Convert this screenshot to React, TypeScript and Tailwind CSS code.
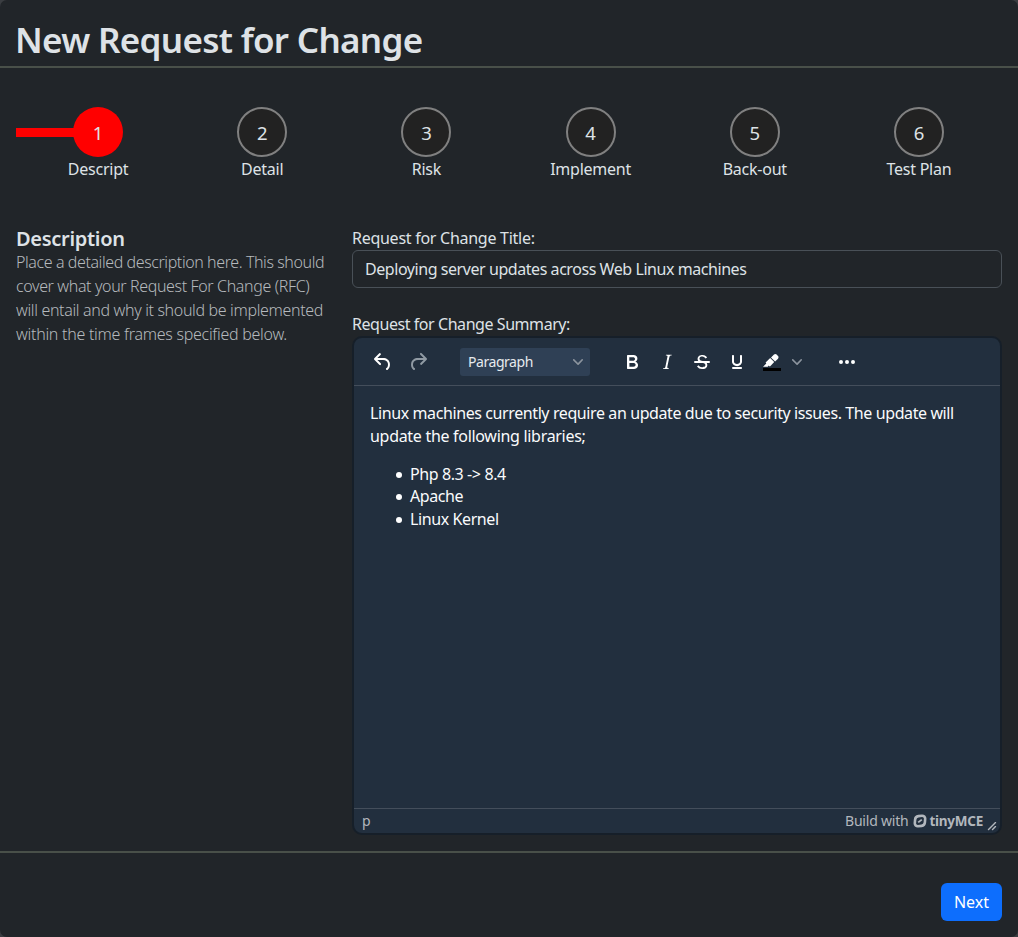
const steps = ['Descript', 'Detail', 'Risk', 'Implement', 'Back-out', 'Test Plan'];

const icons = {
  undo: 'M6.4 8H12c3.7 0 6.2 2 6.8 5.1.6 2.7-.4 5.6-2.3 6.8a1 1 0 0 1-1-1.8c1.1-.6 1.8-2.7 1.4-4.6-.5-2.1-2.1-3.5-4.9-3.5H6.4l3.3 3.3a1 1 0 1 1-1.4 1.4l-5-5a1 1 0 0 1 0-1.4l5-5a1 1 0 0 1 1.4 1.4L6.4 8Z',
  redo: 'M17.6 10H12c-2.8 0-4.4 1.4-4.9 3.5-.4 2 .3 4 1.4 4.6a1 1 0 1 1-1 1.8c-2-1.2-2.9-4.1-2.3-6.8.6-3 3-5.1 6.8-5.1h5.6l-3.3-3.3a1 1 0 1 1 1.4-1.4l5 5a1 1 0 0 1 0 1.4l-5 5a1 1 0 0 1-1.4-1.4l3.3-3.3Z',
  bold: 'M7.8 19c-.3 0-.5 0-.6-.2l-.2-.5V5.7c0-.2 0-.4.2-.5l.6-.2h5c1.5 0 2.7.3 3.5 1 .7.6 1.1 1.4 1.1 2.5a3 3 0 0 1-.6 1.9c-.4.6-1 1-1.6 1.2.4.1.9.3 1.3.6s.8.7 1 1.2c.4.4.5 1 .5 1.6 0 1.3-.4 2.3-1.3 3-.8.7-2.1 1-3.8 1H7.8Zm5-8.3c.6 0 1.2-.1 1.6-.5.4-.3.6-.7.6-1.3 0-1.1-.8-1.7-2.3-1.7H9.3v3.5h3.4Zm.5 6c.7 0 1.3-.1 1.7-.4.4-.4.6-.9.6-1.5s-.2-1-.7-1.4c-.4-.3-1-.4-2-.4H9.4v3.8h4Z',
  italic: 'm16.7 4.7-.1.9h-.3c-.6 0-1 0-1.4.3-.3.3-.4.6-.5 1.1l-2.1 9.8v.6c0 .5.4.8 1.4.8h.2l-.2.8H8l.2-.8h.2c1.1 0 1.8-.5 2-1.5l2-9.8.1-.5c0-.6-.4-.8-1.4-.8h-.3l.2-.9h5.8Z',
  strike: 'M15.6 8.5c-.5-.7-1-1.1-1.3-1.3-.6-.4-1.3-.6-2-.6-2.7 0-2.8 1.7-2.8 2.1 0 1.6 1.8 2 3.2 2.3 4.4.9 4.6 2.8 4.6 3.9 0 1.4-.7 4.1-5 4.1A6.2 6.2 0 0 1 7 16.4l1.5-1.1c.4.6 1.6 2 3.7 2 1.6 0 2.5-.4 3-1.2.4-.8.3-2-.8-2.6-.7-.4-1.6-.7-2.9-1-1-.2-3.9-.8-3.9-3.6C7.6 6 10.3 5 12.4 5c2.9 0 4.2 1.6 4.7 2.4l-1.5 1.1Z',
  strikeBar: 'M5 11h14a1 1 0 0 1 0 2H5a1 1 0 0 1 0-2Z',
  underline: 'M16 5c.6 0 1 .4 1 1v5.5a4 4 0 0 1-.4 1.8l-1 1.4a5.3 5.3 0 0 1-5.5 1 5 5 0 0 1-1.6-1c-.5-.4-.8-.9-1.1-1.4a4 4 0 0 1-.4-1.8V6c0-.6.4-1 1-1s1 .4 1 1v5.5c0 .3 0 .6.2 1l.6.7a3.3 3.3 0 0 0 2.2.8 3.4 3.4 0 0 0 2.2-.8c.3-.2.4-.5.6-.8l.2-.9V6c0-.6.4-1 1-1ZM8 17h8c.6 0 1 .4 1 1s-.4 1-1 1H8a1 1 0 0 1 0-2Z',
  more: 'M6 10a2 2 0 0 0 0 4 2 2 0 0 0 0-4Zm12 0a2 2 0 0 0 0 4 2 2 0 0 0 0-4Zm-6 0a2 2 0 0 0 0 4 2 2 0 0 0 0-4Z',
};

function Icon({ d, d2, className = '' }: { d: string; d2?: string; className?: string }) {
  return (
    <svg width="24" height="24" viewBox="0 0 24 24" fill="currentColor" fillRule="evenodd" className={`shrink-0 ${className}`}>
      <path d={d} />
      {d2 && <path d={d2} />}
    </svg>
  );
}

function Chevron({ className = '' }: { className?: string }) {
  return (
    <svg width="10" height="10" viewBox="0 0 10 10" fill="currentColor" className={`shrink-0 text-[#8b939d] ${className}`}>
      <path d="M8.7 2.2c.3-.3.8-.3 1 0 .4.4.4.9 0 1.2L5.7 7.8c-.3.3-.9.3-1.2 0L.2 3.4a.8.8 0 0 1 0-1.2c.3-.3.8-.3 1.1 0L5 6l3.7-3.8Z" />
    </svg>
  );
}

function Stepper() {
  return (
    <div className="mr-[17px] ml-4 mt-[39px] grid grid-cols-6">
      {steps.map((label, i) => (
        <div key={label} className="flex flex-col items-center">
          <div className="flex w-full items-center">
            <div className={i === 0 ? 'h-[9px] flex-1 bg-[#ff0000]' : 'h-[9px] flex-1'} />
            <div
              className={
                i === 0
                  ? '-mx-px flex h-[50px] w-[50px] items-center justify-center rounded-full bg-[#ff0000] pt-[2px] text-[18.5px]'
                  : '-mx-px flex h-[50px] w-[50px] items-center justify-center rounded-full border-2 border-[#808080] bg-[#222222] pt-[2px] text-[18.5px]'
              }
            >
              {i + 1}
            </div>
            <div className="h-[9px] flex-1" />
          </div>
          <div className="h-6 leading-6 tracking-[-0.24px]">{label}</div>
        </div>
      ))}
    </div>
  );
}

function Editor() {
  return (
    <div className="flex h-[499px] flex-col overflow-hidden rounded-[10px] border-2 border-[#161f29] bg-[#222f3e] text-[#fafbfc]">
      <div className="flex h-12 shrink-0 items-center border-b border-[#444e5b] text-white">
        <Icon d={icons.undo} className="ml-[17px]" />
        <Icon d={icons.redo} className="ml-[11px] text-[#909aa3]" />
        <div className="ml-[30px] flex h-7 w-[130px] items-center justify-between rounded-[3px] bg-[#2f4055] pr-[7px] pl-2 text-[14px] tracking-[-0.45px] text-[#e6eaee]">
          Paragraph
          <Chevron />
        </div>
        <Icon d={icons.bold} className="ml-[30px]" />
        <Icon d={icons.italic} className="ml-[11px]" />
        <Icon d={icons.strike} d2={icons.strikeBar} className="ml-[11px]" />
        <Icon d={icons.underline} className="ml-[11px]" />
        <svg width="24" height="24" viewBox="0 0 24 24" className="ml-[11px] shrink-0">
          <path d="M3 18h18v3H3z" fill="#000" />
          <path
            fill="#fff"
            d="M7.7 16.7H3l3.3-3.3-.7-.8L10.2 8l4 4.1-4 4.2c-.2.2-.6.2-.8 0l-.6-.7-1.1 1.1zm5-7.5L11 7.4l3-2.9a2 2 0 0 1 2.6 0L18 6c.7.7.7 2 0 2.7l-2.9 2.9-1.8-1.8-.5-.6"
          />
        </svg>
        <Chevron className="ml-2" />
        <Icon d={icons.more} className="ml-[33px]" />
      </div>
      <div className="flex-1 px-4 pt-4 text-[16px] leading-[22.4px]">
        <p className="leading-[23px] whitespace-nowrap">
          <span className="tracking-[-0.4px]">
            Linux machines currently require an update due to security issues. The update will
          </span>
          <br />
          <span className="tracking-[-0.3px]">update the following libraries;</span>
        </p>
        <ul className="mt-[14.8px] pl-[26px] tracking-[-0.4px]">
          {['Php 8.3 -> 8.4', 'Apache', 'Linux Kernel'].map((item) => (
            <li key={item} className="flex items-center">
              <span className="mt-[2px] mr-2 h-[6px] w-[6px] rounded-full bg-white" />
              {item}
            </li>
          ))}
        </ul>
      </div>
      <div className="flex h-[25px] shrink-0 items-center border-t border-[#444e5b] pr-[3px] pl-2 text-[14px] text-[#b2b7bd]">
        <span>p</span>
        <span className="ml-auto tracking-[-0.22px]">Build with</span>
        <svg width="14" height="14" viewBox="0 0 14 14" className="ml-[5px]" fill="none" stroke="currentColor">
          <path
            strokeWidth="2.6"
            d="M5.4 2.1 9 1.7a3 3 0 0 1 3.2 3L11.9 8.4a3.8 3.8 0 0 1-3.3 3.5l-3.6.4a3 3 0 0 1-3.2-3L2.1 5.6a3.8 3.8 0 0 1 3.3-3.5Z"
          />
          <path strokeWidth="1.8" d="m5.2 8.4 3.6-2.8" />
        </svg>
        <span className="ml-[2px] text-[13.5px] font-bold tracking-[-0.25px]">tinyMCE</span>
        <svg width="10" height="10" viewBox="0 0 10 10" fill="currentColor" className="mb-[2px] ml-1 self-end">
          <path d="M8.1 1.1A.5.5 0 1 1 9 2l-7 7A.5.5 0 1 1 1 8l7-7ZM8.1 5.1A.5.5 0 1 1 9 6l-3 3A.5.5 0 1 1 5 8l3-3Z" />
        </svg>
      </div>
    </div>
  );
}

export default function App() {
  return (
    <div className="bg-[#3a3d41] font-['Noto_Sans',sans-serif]">
      <div className="flex h-[937px] w-[1018px] flex-col overflow-hidden rounded-[7px] bg-[#212529] text-[16px] leading-6 text-[#dee2e6]">
        <header className="flex h-[68px] shrink-0 items-start border-b-2 border-[#495049] px-[15px] pt-[18px]">
          <h1 className="text-[35px] leading-[43px] font-semibold tracking-[-0.69px] whitespace-nowrap">New Request for Change</h1>
        </header>
        <Stepper />
        <main className="mx-4 mt-[45px] grid grid-cols-[320px_650px] gap-4">
          <section>
            <h2 className="pt-px text-[20px] leading-[23px] font-semibold tracking-[-0.3px]">Description</h2>
            <p className="font-light whitespace-nowrap text-[#b5b9bd]">
              <span className="tracking-[-0.41px]">Place a detailed description here. This should</span>
              <br />
              <span className="tracking-[-0.37px]">cover what your Request For Change (RFC)</span>
              <br />
              <span className="tracking-[-0.34px]">will entail and why it should be implemented</span>
              <br />
              <span className="tracking-[-0.27px]">within the time frames specified below.</span>
            </p>
          </section>
          <section>
            <div className="tracking-[-0.27px]">Request for Change Title:</div>
            <div className="mb-6 flex h-[38px] items-center rounded-md border border-[#495057] px-3 tracking-[-0.44px]">
              Deploying server updates across Web Linux machines
            </div>
            <div className="tracking-[-0.44px]">Request for Change Summary:</div>
            <Editor />
          </section>
        </main>
        <footer className="mt-4 flex flex-1 items-start justify-end border-t-2 border-[#495049] px-4 pt-[30px]">
          <button className="flex h-[38px] w-[61px] items-center justify-center rounded-md bg-[#0d6efd] text-white">Next</button>
        </footer>
      </div>
    </div>
  );
}
